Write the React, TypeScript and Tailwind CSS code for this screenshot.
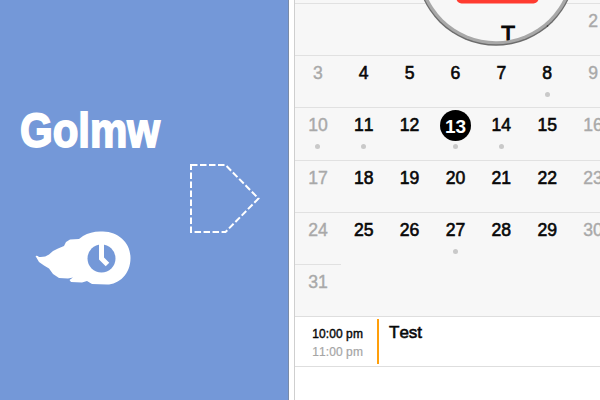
type Day = { n: number; dot?: boolean; today?: boolean };

const weeks: { height: string; days: (Day | null)[] }[] = [
  { height: "h-[52px]", days: [null, null, null, null, null, null, { n: 2 }] },
  { height: "h-[52px]", days: [{ n: 3 }, { n: 4 }, { n: 5 }, { n: 6 }, { n: 7 }, { n: 8, dot: true }, { n: 9 }] },
  {
    height: "h-[53px]",
    days: [
      { n: 10, dot: true },
      { n: 11, dot: true },
      { n: 12 },
      { n: 13, dot: true, today: true },
      { n: 14, dot: true },
      { n: 15 },
      { n: 16 },
    ],
  },
  { height: "h-[52px]", days: [{ n: 17 }, { n: 18 }, { n: 19 }, { n: 20 }, { n: 21 }, { n: 22 }, { n: 23 }] },
  { height: "h-[52px]", days: [{ n: 24 }, { n: 25 }, { n: 26 }, { n: 27, dot: true }, { n: 28 }, { n: 29 }, { n: 30 }] },
];

function DayCell({ day, weekend }: { day: Day | null; weekend: boolean }) {
  if (!day) return <div />;
  const tone = day.today
    ? "bg-black text-white font-bold text-[19px]"
    : weekend
      ? "text-[#a9a9a9] text-[17.6px] [-webkit-text-stroke:0.4px_#a9a9a9]"
      : "text-[#080808] text-[17.6px] [-webkit-text-stroke:0.6px_#080808]";
  return (
    <div className="flex flex-col items-center pt-[2px]">
      <span className={`flex size-[31px] shrink-0 items-center justify-center rounded-full pt-px leading-none [font-kerning:none] ${tone}`}>
        {day.n}
      </span>
      {day.dot && <span className="mt-[3px] size-[5px] shrink-0 rounded-full bg-[#c9c9c9]" />}
    </div>
  );
}

function Brand() {
  return (
    <svg className="block" width="288" height="400" viewBox="0 0 288 400">
      <text
        x="20"
        y="147"
        textLength="140"
        lengthAdjust="spacingAndGlyphs"
        fontSize="49"
        fontWeight="700"
        fill="white"
        stroke="white"
        strokeWidth="1.8"
        className="font-['Liberation_Sans',Arial,sans-serif]"
      >
        Golmw
      </text>
      <path
        d="M35.500 256 Q37 255 39 257 Q45 257.500 49 254.500 L53 251 L58 248.500 L64 246 L66 242 L70 239.500 L79 239 L83 236 C89 232.500 95 231 103 231.500 C119 232 130.500 243 130.500 258 C130.500 274 119 284.500 107 284.500 L92 284 L87 281 L82 282.500 L71 282 L69.500 280 L73 277.500 L68 278.500 L59 278 L53 274 L49 268.500 L44 265.500 L39 262 Z"
        fill="white"
      />
      <circle cx="101.500" cy="258.500" r="14" fill="#7498d8" />
      <path d="M101.500 244 V258.500 L107.500 264.500" fill="none" stroke="white" strokeWidth="5" />
      <path
        d="M191 165 H225.500 L258.500 198.500 L225.500 232 H191 Z"
        fill="none"
        stroke="white"
        strokeWidth="2"
        strokeDasharray="6.5 2.5"
      />
    </svg>
  );
}

function Magnifier() {
  return (
    <svg className="absolute top-0 left-[120px]" width="162" height="50" viewBox="415 0 162 50">
      <defs>
        <clipPath id="lens">
          <circle cx="496" cy="-34" r="75.300" />
        </clipPath>
      </defs>
      <circle cx="496" cy="-34" r="79.800" fill="#6c6c6c" />
      <circle cx="496" cy="-34.500" r="78.800" fill="#a8a8a8" />
      <g clipPath="url(#lens)">
        <rect x="410" y="-20" width="170" height="70" fill="#f7f7f7" />
        <rect x="456.500" y="-20" width="82" height="23.500" rx="5" fill="#ff3b30" />
        <text
          x="508.200"
          y="41"
          textAnchor="middle"
          fontSize="22.500"
          fill="#080808"
          stroke="#080808"
          strokeWidth="1.2"
          className="font-['Liberation_Sans',Arial,sans-serif]"
        >
          T
        </text>
      </g>
      <circle cx="547.500" cy="26" r="0.8" fill="#333" />
    </svg>
  );
}

export default function App() {
  return (
    <div className="flex h-[400px] w-[600px] overflow-hidden bg-white font-['Liberation_Sans',Arial,sans-serif]">
      <aside className="w-[289px] shrink-0 border-r border-[#788aa8] bg-[#7498d8]">
        <Brand />
      </aside>
      <main className="relative ml-[5px] w-[306px] shrink-0 overflow-hidden border-l border-[#cfcfcf] bg-white">
        <section className="h-[316px] w-[321px] bg-[#f7f7f7] pt-[3px]">
          {weeks.map((week, i) => (
            <div key={i} className={`grid grid-cols-7 border-t border-[#e1e1e1] ${week.height}`}>
              {week.days.map((day, j) => (
                <DayCell key={j} day={day} weekend={j === 0 || j === 6} />
              ))}
            </div>
          ))}
          <div className="grid grid-cols-7">
            <div className="border-t border-[#e1e1e1]">
              <DayCell day={{ n: 31 }} weekend />
            </div>
          </div>
        </section>
        <section className="flex h-[51px] border-y border-[#dedede]">
          <div className="flex w-[68px] flex-col items-end pt-[8px] text-[12px] leading-[18px] tracking-[0.1px] whitespace-nowrap [font-kerning:none]">
            <span className="text-[#080808] [-webkit-text-stroke:0.4px_#080808]">10:00 pm</span>
            <span className="text-[#a5a5a5] [-webkit-text-stroke:0.2px_#a5a5a5]">11:00 pm</span>
          </div>
          <div className="mt-[2px] ml-[14px] h-[45px] w-[2px] bg-[#ff9f0a]" />
          <span className="mt-[6px] ml-[10px] text-[17px] leading-5 text-[#080808] [-webkit-text-stroke:0.6px_#080808] [font-kerning:none]">
            Test
          </span>
        </section>
        <Magnifier />
      </main>
    </div>
  );
}
